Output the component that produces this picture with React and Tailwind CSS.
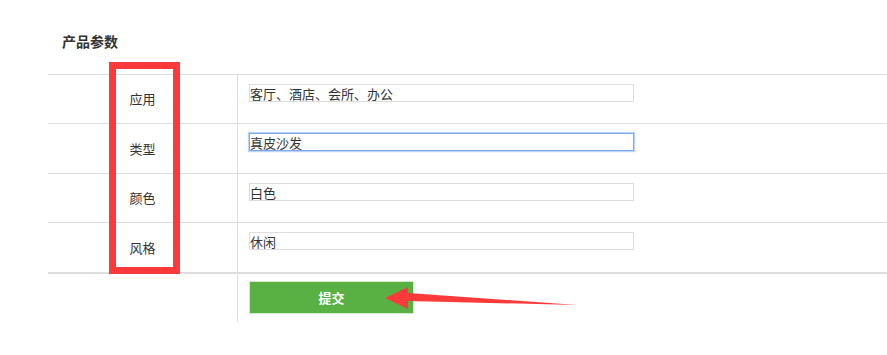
const rows = [
  { label: "应用", value: "客厅、酒店、会所、办公", h: "h-[49px]" },
  { label: "类型", value: "真皮沙发", h: "h-[50px]", focus: true },
  { label: "颜色", value: "白色", h: "h-[49px]" },
  { label: "风格", value: "休闲", h: "h-[50px]" },
];

export default function App() {
  return (
    <div
      className="relative w-[887px] h-[355px] overflow-hidden bg-white text-[#333]"
      style={{ fontFamily: '"Noto Sans CJK SC", "Noto Sans", sans-serif' }}
    >
      <div className="h-[74px] pl-[62px] pt-[32px] text-[14px] leading-[18px] font-bold">产品参数</div>

      <div className="ml-[48px]">
        {rows.map((r) => (
          <div key={r.label} className={`grid grid-cols-[190px_1fr] border-t border-[#dddddd] ${r.h}`}>
            <div className="flex items-center justify-center border-r border-[#dddddd] text-[13px]">
              {r.label}
            </div>
            <div className="pl-[11px] pt-[9px]">
              <input
                readOnly
                defaultValue={r.value}
                className={`block w-[385px] h-[18px] px-0 text-[13px] leading-[16px] text-[#333] outline-none border ${
                  r.focus ? "border-[#7ea9f3] shadow-[0_0_1px_1px_rgba(120,165,245,0.5)]" : "border-[#dddddd]"
                }`}
              />
            </div>
          </div>
        ))}
        <div className="grid grid-cols-[190px_1fr] border-t-2 border-[#dddddd] h-[50px]">
          <div className="border-r border-[#dddddd] h-[48px]" />
          <div className="pl-[11px] pt-[7px]">
            <button className="w-[165px] h-[33px] bg-[#5ab143] border border-[#d6e8d0] text-white text-[13px] font-bold">
              提交
            </button>
          </div>
        </div>
      </div>

      <div className="absolute left-[109px] top-[62px] w-[71px] h-[212px] border-[7px] border-[#fd3a3a]" />

      <svg className="absolute left-0 top-0" width="887" height="355">
        <polygon points="385,298 408,287 408,293 577,305 408,301 408,309" fill="#fd3a3a" />
      </svg>
    </div>
  );
}
